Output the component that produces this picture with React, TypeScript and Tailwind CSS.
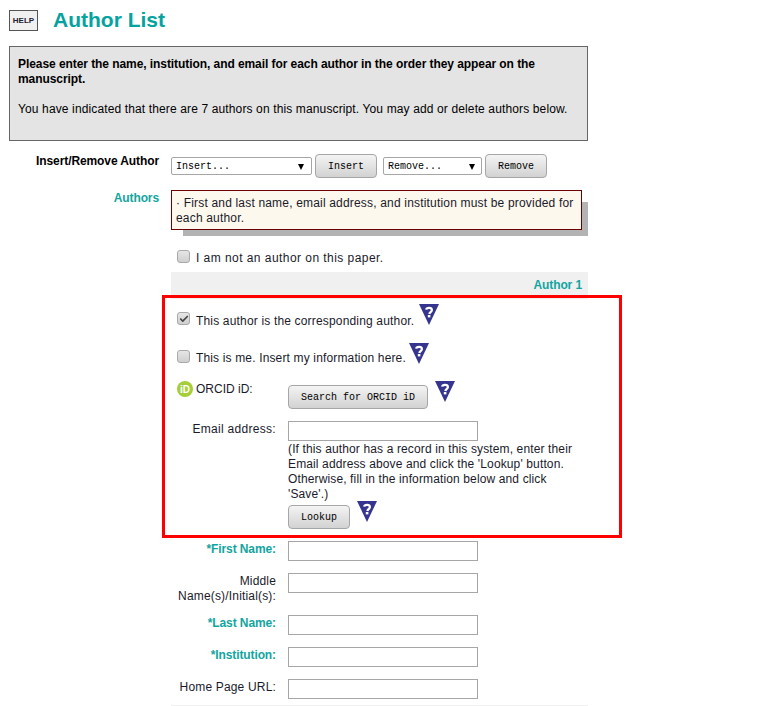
import { Check } from 'lucide-react';

const teal = 'text-[#12a5a0]';

function Help({ className = '' }: { className?: string }) {
    return (
        <svg width="20" height="21" viewBox="0 0 20 21" className={className}>
            <path d="M0 0H20L10 21Z" fill="#35358f" />
            <path d="M7.2 5.6C7.4 3.6 12.8 3 12.9 6C13 8 10.6 8.2 10.3 10" fill="none" stroke="#fff" strokeWidth="2.2" />
            <rect x="8.8" y="11" width="2.6" height="2.4" fill="#fff" />
        </svg>
    );
}

function Box({ checked = false }: { checked?: boolean }) {
    return (
        <span className="w-[13px] h-[13px] shrink-0 rounded-[3px] border border-[#a9a9a9] bg-gradient-to-b from-[#e6e6e6] to-[#cfcfcf] flex items-center justify-center">
            {checked && <Check size={10} strokeWidth={4} className="text-[#444]" />}
        </span>
    );
}

function Btn({ label, className = '' }: { label: string; className?: string }) {
    return (
        <button className={`h-6 pt-[1px] rounded-[4px] border border-[#a6a6a6] bg-gradient-to-b from-[#f4f4f4] to-[#d2d2d2] text-[10px] tracking-normal text-black font-['Liberation_Mono',monospace] ${className}`}>
            {label}
        </button>
    );
}

function Select({ label, className = '' }: { label: string; className?: string }) {
    return (
        <div className={`h-[18px] pt-[1px] flex items-center justify-between pl-1 bg-white border border-[#a6a6a6] rounded-[2px] text-[10px] tracking-normal text-black font-['Liberation_Mono',monospace] ${className}`}>
            <span>{label}</span>
            <span className="w-0 h-0 border-x-[3px] border-x-transparent border-t-[6px] border-t-black" />
        </div>
    );
}

function Field({ label, required = false, className = '' }: { label: string; required?: boolean; className?: string }) {
    return (
        <div className={`flex items-start ${className}`}>
            <label className={`w-[105px] text-right leading-[15px] pt-[1px] ${required ? `font-bold tracking-[-0.1px] ${teal}` : ''}`}>{label}</label>
            <div className="ml-3 w-[190px] h-5 border border-[#a6a6a6] bg-white shrink-0" />
        </div>
    );
}

export default function App() {
    return (
        <div className="relative w-[767px] h-[706px] overflow-hidden bg-white text-[12px] leading-[15px] tracking-[0.17px] text-[#1a1a2a] font-['Liberation_Sans',Arial,sans-serif]">
            <div className="w-[579px] ml-[9px]">
                <header className="flex items-center pt-[9px] h-[46px] pb-[15px]">
                    <div className="w-[29px] h-[21px] border border-[#555] bg-[#f0f0f0] flex items-center justify-center text-[8px] tracking-normal font-bold text-[#223]">HELP</div>
                    <h1 className="ml-[15px] text-[21px] leading-[24px] tracking-normal font-bold text-[#04a3a0]">Author List</h1>
                </header>

                <section className="h-[95px] border border-[#666] bg-[#e4e4e4] pl-2 pr-2 pt-[10px] text-black">
                    <p className="font-bold tracking-[-0.07px]">Please enter the name, institution, and email for each author in the order they appear on the manuscript.</p>
                    <p className="mt-[15px] tracking-[0.13px]">You have indicated that there are 7 authors on this manuscript. You may add or delete authors below.</p>
                </section>

                <div className="flex mt-[13px]">
                    <div className="w-[150px] text-right font-bold tracking-[-0.1px] text-black">Insert/Remove Author</div>
                    <div className="ml-3 flex items-center">
                        <Select label="Insert..." className="w-[141px] pr-[7px]" />
                        <Btn label="Insert" className="w-[62px] ml-[3px]" />
                        <Select label="Remove..." className="w-[99px] ml-[6px] pr-[6px]" />
                        <Btn label="Remove" className="w-[62px] ml-[3px]" />
                    </div>
                </div>

                <div className="flex mt-[12px]">
                    <div className={`w-[150px] text-right font-bold tracking-[-0.1px] ${teal} pt-[1px]`}>Authors</div>
                    <div className="ml-3 w-[417px]">
                        <div className="relative h-[46px]">
                            <div className="absolute left-3 right-0 top-[12px] bottom-0 bg-[#b3b3b3]" />
                            <div className="relative w-[411px] h-[40px] border border-[#6b0000] bg-[#fdf8ee] px-[4px] pt-[5px] tracking-[0.18px]">
                                · First and last name, email address, and institution must be provided for each author.
                            </div>
                        </div>
                        <div className="flex items-center gap-[6px] mt-[13px] pl-[6px] h-[15px]">
                            <Box />
                            <span className="tracking-[0.45px] mt-[4px]">I am not an author on this paper.</span>
                        </div>
                        <div className={`mt-[8px] h-[27px] bg-[#f0f0f0] flex items-center justify-end pr-[6px] font-bold tracking-[-0.1px] ${teal}`}>Author 1</div>

                        <div className="flex items-center gap-[6px] mt-[12px] pl-[6px] h-[15px]">
                            <Box checked />
                            <span className="mt-[6px]">This author is the corresponding author.</span>
                            <Help className="-mt-[9px] -ml-[1px]" />
                        </div>
                        <div className="flex items-center gap-[6px] mt-[23px] pl-[6px] h-[15px]">
                            <Box />
                            <span className="mt-[4px] tracking-[0.15px]">This is me. Insert my information here.</span>
                            <Help className="-mt-[7px] -ml-[3px]" />
                        </div>

                        <div className="flex items-start mt-[18px]">
                            <div className="w-[117px] flex items-center gap-[3px] pl-[6px] -mt-[1px]">
                                <span className="w-4 h-4 rounded-full bg-[#a6ce39] text-white text-[10px] tracking-normal font-bold flex items-center justify-center">iD</span>
                                <span className="tracking-normal">ORCID iD:</span>
                            </div>
                            <Btn label="Search for ORCID iD" className="w-[140px] mt-[3px]" />
                            <Help className="ml-[7px] -mt-[1px]" />
                        </div>

                        <div className="flex items-start mt-[12px]">
                            <label className="w-[105px] text-right pt-[1px] tracking-[0.3px]">Email address:</label>
                            <div className="ml-3 w-[190px] h-5 border border-[#a6a6a6] bg-white" />
                        </div>
                        <p className="ml-[117px] w-[290px] mt-[1px] tracking-[0.13px]">(If this author has a record in this system, enter their Email address above and click the 'Lookup' button. Otherwise, fill in the information below and click 'Save'.)</p>
                        <div className="flex items-start ml-[117px] mt-[3px]">
                            <Btn label="Lookup" className="w-[62px]" />
                            <Help className="ml-[7px] -mt-[4px]" />
                        </div>

                        <Field label="*First Name:" required className="mt-[12px]" />
                        <Field label="Middle Name(s)/Initial(s):" className="mt-3 h-[42px]" />
                        <Field label="*Last Name:" required />
                        <Field label="*Institution:" required className="mt-3" />
                        <Field label="Home Page URL:" className="mt-3" />
                        <div className="mt-[6px] h-px bg-[#f0f0f0]" />
                    </div>
                </div>
            </div>
            <div className="absolute left-[162px] top-[295px] w-[460px] h-[243px] border-[3px] border-[#ff0000] pointer-events-none" />
        </div>
    );
}
